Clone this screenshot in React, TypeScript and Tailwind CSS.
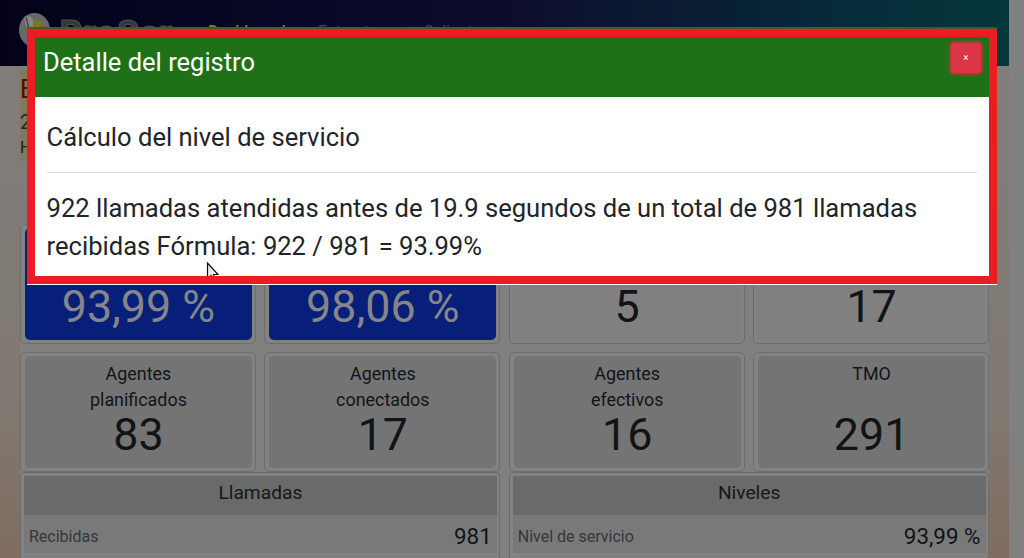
type Metric = { id: string; label: string[]; value: string; tone: 'blue' | 'plain' | 'gray' };

const metrics: Metric[] = [
  { id: 'service', label: [], value: '93,99 %', tone: 'blue' },
  { id: 'attention', label: [], value: '98,06 %', tone: 'blue' },
  { id: 'queue', label: [], value: '5', tone: 'plain' },
  { id: 'active', label: [], value: '17', tone: 'plain' },
  { id: 'planned', label: ['Agentes', 'planificados'], value: '83', tone: 'gray' },
  { id: 'connected', label: ['Agentes', 'conectados'], value: '17', tone: 'gray' },
  { id: 'effective', label: ['Agentes', 'efectivos'], value: '16', tone: 'gray' },
  { id: 'tmo', label: ['TMO'], value: '291', tone: 'gray' },
];

const tones = {
  blue: 'bg-[#071f78] text-[#85858b]',
  plain: 'bg-[#808080] text-[#101416]',
  gray: 'bg-[#747474] text-[#101416]',
};

const tables = [
  { title: 'Llamadas', row: 'Recibidas', value: '981' },
  { title: 'Niveles', row: 'Nivel de servicio', value: '93,99 %' },
];

function MetricCard({ label, value, tone }: Metric) {
  return (
    <div className="h-[120px] rounded-[5px] border border-[#6d6d6d] bg-[#828282] py-[3px] pl-1 pr-[3px]">
      <div className={`flex h-full flex-col items-center rounded-[5px] pt-[5px] ${tones[tone]}`}>
        <div className="h-[52px] text-center text-[17.9px] leading-[26px]">
          {label.map((line) => (
            <div key={line}>{line}</div>
          ))}
        </div>
        <div className="-mt-px text-[44.8px] leading-[46px]">{value}</div>
      </div>
    </div>
  );
}

function Header() {
  return (
    <header className="flex h-[66px] items-start bg-[linear-gradient(90deg,#03021a_0%,#090826_30%,#0d0d2b_50%,#0a1b32_67%,#062b39_83%,#05363c_100%)]">
      <svg className="ml-[19px] mt-[12px] shrink-0" width="33" height="36" viewBox="0 0 33 36">
        <ellipse cx="15.5" cy="18" rx="15.5" ry="17" fill="#686868" />
        <path d="M5 5 Q10 2 14 7 L14 18 L7 14Z" fill="#858585" />
        <path d="M14 8 H20 Q25 11 23 18 H14Z" fill="#7b7421" />
        <path d="M7 5 L10 17" stroke="#3b3b37" strokeWidth="1.2" />
      </svg>
      <div className="ml-[8px] mt-[11px] w-[148px] text-[34px] font-black leading-[42px] tracking-[1.2px] text-[#36363d] [-webkit-text-stroke:1px_#4d4d50]">ProSer</div>
      <nav className="mt-[20px] flex text-[16px] leading-6">
        <span className="w-[110px] font-medium text-[#838300]">Dashboard</span>
        <span className="w-[106px] text-[#444451]">Entrantes</span>
        <span className="text-[#444451]">Salientes</span>
      </nav>
    </header>
  );
}

function Modal() {
  return (
    <div className="absolute left-[27px] top-[27px] h-[258px] w-[970px] rounded-t-[3px] border-b border-t-2 border-b-white border-t-[#54551a] bg-white">
      <div className="h-full border-8 border-[#ec1c24]">
        <div className="flex h-[60px] items-start justify-between bg-[#1f7118] pl-2 pr-[9px] pt-[5px]">
          <h2 className="text-[25.5px] leading-[40px] text-white">Detalle del registro</h2>
          <button className="-mr-px mt-px h-[30px] w-[30px] rounded-[3px] bg-[#dc3545] text-[10px] leading-[30px] text-white shadow-[0_0_2px_2px_#ad3934]">×</button>
        </div>
        <div className="pl-3 pr-3 text-[25.57px] text-[#212529]">
          <h3 className="h-[76px] border-b border-[#dedede] pt-[20px] leading-[40px]">
            <span className="-ml-[0.4px]">Cálculo del nivel de servicio</span>
          </h3>
          <p className="-ml-[0.4px] whitespace-nowrap pt-[16px] leading-[38.4px]">
            922 llamadas atendidas antes de 19.9 segundos de un total de 981 llamadas
            <br />
            recibidas Fórmula: 922 / 981 = 93.99%
          </p>
        </div>
        <svg className="absolute left-[179px] top-[233px]" width="14" height="14" viewBox="0 0 14 14">
          <path d="M1.5 1 V17 L5 13.5 L7 18 L9 17 L7.5 12.5 H12Z" fill="#e8e8e8" stroke="#111" strokeWidth="1.2" />
        </svg>
      </div>
    </div>
  );
}

export default function App() {
  return (
    <div className="relative h-[558px] w-[1024px] overflow-hidden bg-[#808080] font-[Roboto,sans-serif]">
      <div className="w-[1009px]">
        <Header />
        <main className="h-[492px] bg-[linear-gradient(180deg,#827d79_0%,#807a75_50%,#80776f_73%,#806d5f_100%)] pl-5 pr-5 pt-[4px]">
          <div className="h-[91px] w-[300px] bg-[#82775f] text-[#252420]">
            <div className="pt-px text-[25px] leading-[38px] text-[#5a0805]">E</div>
            <div className="text-[20px] leading-[27px]">2</div>
            <div className="text-[16px] leading-[24px] text-[#202614]">H</div>
          </div>
          <div className="mt-[63px] h-[334px] bg-[#808080]">
            <div className="grid grid-cols-4 gap-x-[8.5px] gap-y-2">
              {metrics.map((m) => (
                <MetricCard key={m.id} {...m} />
              ))}
            </div>
            <div className="grid grid-cols-2 gap-x-[8.5px]">
              {tables.map((t) => (
                <section key={t.title} className="h-[100px] rounded-[4px] border border-[#6d6d6d] bg-[#828282] pl-[3px] pr-[2.5px] pt-[3px]">
                  <h4 className="h-[39px] bg-[#6a6a6a] text-center text-[19.2px] leading-[34px] text-[#14181a]">{t.title}</h4>
                  <div className="flex h-[38px] items-center justify-between bg-[#797979] pl-[5px] pr-[5px] pt-[6px]">
                    <span className="text-[16px] text-[#34373a]">{t.row}</span>
                    <span className="text-[22.4px] text-[#101416]">{t.value}</span>
                  </div>
                </section>
              ))}
            </div>
          </div>
        </main>
      </div>
      <Modal />
    </div>
  );
}
